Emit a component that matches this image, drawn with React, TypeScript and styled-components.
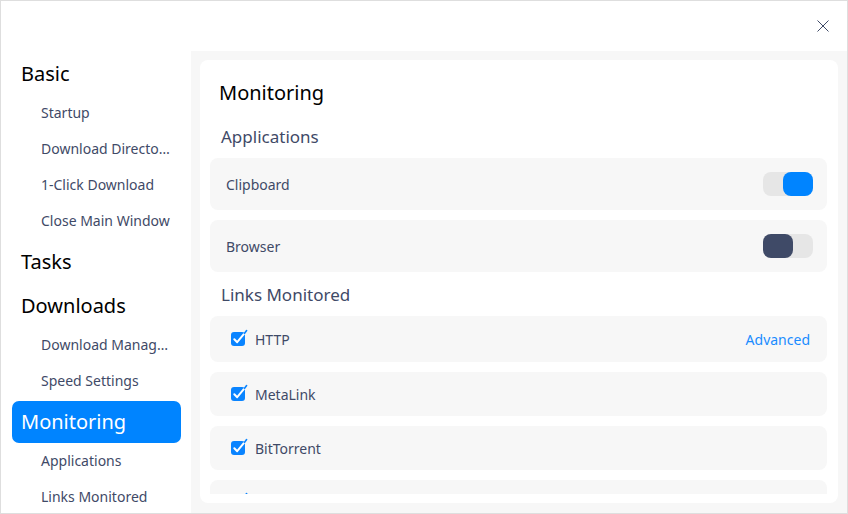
import React from "react";
import styled, { createGlobalStyle } from "styled-components";

const Global = createGlobalStyle`
  html, body { margin: 0; padding: 0; background: #fff; }
  body { font-family: "Noto Sans", "Open Sans", sans-serif; }
  * { box-sizing: border-box; }
`;

const Window = styled.div`
  width: 848px;
  height: 514px;
  border: 1px solid #dedede;
  background: #fff;
  display: flex;
  flex-direction: column;
  overflow: hidden;
`;

const Header = styled.div`
  height: 50px;
  flex: none;
  display: flex;
  align-items: center;
  justify-content: flex-end;
  padding-right: 12px;
`;

const CloseButton = styled.button`
  width: 24px;
  height: 24px;
  border: none;
  background: transparent;
  padding: 0;
  display: flex;
  align-items: center;
  justify-content: center;
  cursor: pointer;
`;

const Body = styled.div`
  flex: 1;
  display: flex;
  min-height: 0;
`;

const Sidebar = styled.nav`
  width: 190px;
  flex: none;
  padding: 0 10px 0 11px;
  overflow: hidden;
  display: flex;
  flex-direction: column;
`;

const NavTitle = styled.div<{ $active?: boolean }>`
  height: 42px;
  flex: none;
  margin-top: 2px;
  padding: 0 10px 2px 9px;
  display: flex;
  align-items: center;
  font-size: 20px;
  color: ${(p) => (p.$active ? "#fff" : "#000")};
  background: ${(p) => (p.$active ? "#0084ff" : "transparent")};
  border-radius: 7px;
`;

const NavItem = styled.div`
  height: 36px;
  flex: none;
  line-height: 36px;
  padding: 0 10px 0 29px;
  font-size: 14px;
  color: #3f4a67;
  white-space: nowrap;
  overflow: hidden;
  text-overflow: ellipsis;
`;

const Main = styled.main`
  flex: 1;
  background: #f7f7f7;
  padding: 9px 9px 10px;
  display: flex;
  min-width: 0;
`;

const Card = styled.section`
  flex: 1;
  background: #fff;
  border-radius: 8px;
  padding: 0 11px 9px 10px;
  display: flex;
  flex-direction: column;
  min-height: 0;
`;

const Scroll = styled.div`
  flex: 1;
  overflow: hidden;
  padding-top: 19px;
  display: flex;
  flex-direction: column;
`;

const CardTitle = styled.h1`
  margin: 0;
  padding-left: 9px;
  font-size: 20px;
  font-weight: 400;
  line-height: 28px;
  color: #000;
`;

const SectionTitle = styled.h2<{ $top: number }>`
  margin: ${(p) => p.$top}px 0 9px;
  padding-left: 11px;
  font-size: 17px;
  font-weight: 400;
  line-height: 24px;
  color: #3f4a67;
`;

const List = styled.div`
  display: flex;
  flex-direction: column;
  gap: 10px;
  flex: none;
`;

const Row = styled.div<{ $h: number; $pl: number; $pr: number }>`
  height: ${(p) => p.$h}px;
  flex: none;
  display: flex;
  align-items: center;
  padding: 0 ${(p) => p.$pr}px 0 ${(p) => p.$pl}px;
  background: #f7f7f7;
  border-radius: 8px;
  font-size: 14px;
  color: #3f4a67;
`;

const Label = styled.span`
  flex: 1;
`;

const Track = styled.div<{ $on: boolean }>`
  width: 50px;
  height: 24px;
  border-radius: 8px;
  background: #e6e6e6;
  display: flex;
  justify-content: ${(p) => (p.$on ? "flex-end" : "flex-start")};
`;

const Knob = styled.div<{ $on: boolean }>`
  width: 30px;
  height: 24px;
  border-radius: 8px;
  background: ${(p) => (p.$on ? "#0084ff" : "#3f4a67")};
`;

const CheckIcon = styled.svg`
  flex: none;
  margin-right: 6px;
`;

const Link = styled.a`
  color: #1a8cff;
  font-size: 14px;
  text-decoration: none;
  cursor: pointer;
`;

const Toggle = ({ on }: { on: boolean }) => (
  <Track $on={on}>
    <Knob $on={on} />
  </Track>
);

const Check = () => (
  <CheckIcon width="18" height="20" viewBox="0 0 18 20">
    <rect x="0" y="3" width="14" height="14" rx="3" fill="#0a84ff" />
    <path d="M3.3 10.2 L6.2 13.2 L12.8 5.2" fill="none" stroke="#fff" strokeWidth="2" strokeLinecap="round" strokeLinejoin="round" />
    <path d="M13.6 4.2 L15.6 1.6" fill="none" stroke="#0a84ff" strokeWidth="1.6" strokeLinecap="round" />
  </CheckIcon>
);

const CheckRow = ({ label, h = 44, extra }: { label: string; h?: number; extra?: React.ReactNode }) => (
  <Row $h={h} $pl={21} $pr={17}>
    <Check />
    <Label>{label}</Label>
    {extra}
  </Row>
);

export default function App() {
  return (
    <>
      <Global />
      <Window>
        <Header>
          <CloseButton aria-label="Close">
            <svg width="12" height="12" viewBox="0 0 12 12">
              <path d="M0.5 0.5 L11.5 11.5 M11.5 0.5 L0.5 11.5" stroke="#3f4a67" strokeWidth="1" />
            </svg>
          </CloseButton>
        </Header>
        <Body>
          <Sidebar>
            <NavTitle>Basic</NavTitle>
            <NavItem>Startup</NavItem>
            <NavItem>Download Directory</NavItem>
            <NavItem>1-Click Download</NavItem>
            <NavItem>Close Main Window</NavItem>
            <NavTitle>Tasks</NavTitle>
            <NavTitle>Downloads</NavTitle>
            <NavItem>Download Management</NavItem>
            <NavItem>Speed Settings</NavItem>
            <NavTitle $active>Monitoring</NavTitle>
            <NavItem>Applications</NavItem>
            <NavItem>Links Monitored</NavItem>
          </Sidebar>
          <Main>
            <Card>
              <Scroll>
                <CardTitle>Monitoring</CardTitle>
                <SectionTitle $top={18}>Applications</SectionTitle>
                <List>
                  <Row $h={52} $pl={16} $pr={14}>
                    <Label>Clipboard</Label>
                    <Toggle on={true} />
                  </Row>
                  <Row $h={52} $pl={16} $pr={14}>
                    <Label>Browser</Label>
                    <Toggle on={false} />
                  </Row>
                </List>
                <SectionTitle $top={11}>Links Monitored</SectionTitle>
                <List>
                  <CheckRow label="HTTP" h={46} extra={<Link>Advanced</Link>} />
                  <CheckRow label="MetaLink" />
                  <CheckRow label="BitTorrent" />
                  <CheckRow label="eMule" />
                </List>
              </Scroll>
            </Card>
          </Main>
        </Body>
      </Window>
    </>
  );
}
